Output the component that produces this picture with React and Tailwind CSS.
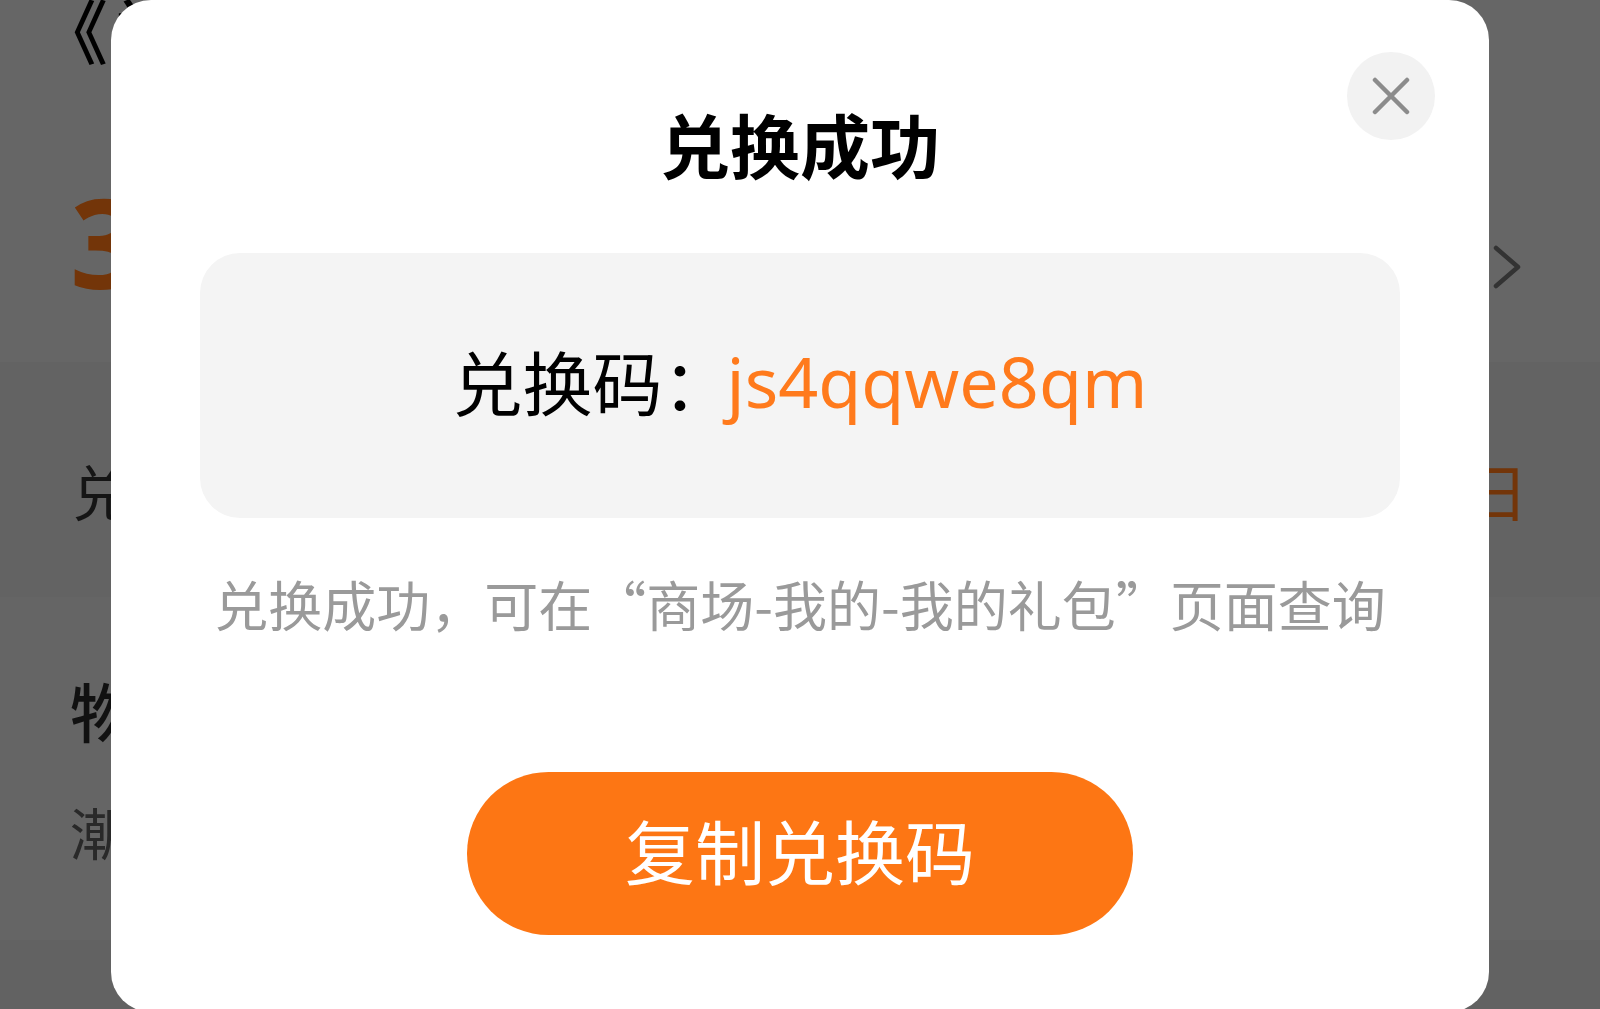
import React from "react";

const cjk = { fontFamily: '"Noto Sans CJK SC", "Noto Sans", sans-serif' };
const latin = { fontFamily: '"Noto Sans", "Noto Sans CJK SC", sans-serif' };

function CloseIcon() {
  return (
    <svg width="38" height="38" viewBox="0 0 38 38" fill="none">
      <path d="M3 3L35 35M35 3L3 35" stroke="#8c8c8c" strokeWidth="4.5" strokeLinecap="round" />
    </svg>
  );
}

function Chevron() {
  return (
    <svg width="30" height="44" viewBox="0 0 30 44" fill="none">
      <path d="M4 3L26 22L4 41" stroke="#333333" strokeWidth="4.5" strokeLinecap="round" strokeLinejoin="round" />
    </svg>
  );
}

// page behind the dialog, dimmed
function BackgroundPage() {
  return (
    <div className="flex flex-col w-full" style={cjk}>
      <div className="h-[362px] bg-[#666666] flex flex-col">
        <div className="pl-[38px] -mt-[6px] h-[70px] text-[70px] leading-[70px] font-medium text-black">《兑换礼包》</div>
        <div className="flex items-center justify-between pl-[70px] pr-[78px] mt-[115px]">
          <span className="text-[124px] leading-[124px] font-bold text-[#733509]" style={latin}>3</span>
          <div className="mt-[52px]">
            <Chevron />
          </div>
        </div>
      </div>
      <div className="h-[235px] bg-[#636363] flex items-center justify-between pl-[72px] pr-[72px] pt-[20px]">
        <span className="text-[60px] leading-[60px] text-[#151515]">兑换时间</span>
        <span className="text-[62px] leading-[62px] text-[#733509]">2024年5月1日</span>
      </div>
      <div className="h-[343px] bg-[#656565] flex flex-col pl-[70px] pt-[80px]">
        <span className="text-[64px] leading-[64px] font-medium text-[#111111]">物品信息</span>
        <span className="mt-[62px] text-[56px] leading-[56px] text-[#292929]">潮流礼包</span>
      </div>
      <div className="h-[69px] bg-[#626262]" />
    </div>
  );
}

export default function App() {
  return (
    <div className="relative w-[1600px] h-[1009px] overflow-hidden bg-[#666666]">
      <BackgroundPage />

      {/* dialog */}
      <div className="absolute left-[111px] top-0 w-[1378px] h-[1012px] bg-white rounded-[40px] flex flex-col items-center" style={cjk}>
        <button className="absolute right-[54px] top-[52px] w-[88px] h-[88px] rounded-full bg-[#f2f2f2] flex items-center justify-center">
          <CloseIcon />
        </button>

        <h1 className="mt-[109px] text-[70px] leading-[70px] font-bold text-black">兑换成功</h1>

        <div className="mt-[74px] w-[1200px] h-[265px] rounded-[40px] bg-[#f4f4f4] flex items-center justify-center pb-[10px]">
          <span className="text-[70px] leading-[70px] text-black">兑换码：</span>
          <span className="text-[70px] leading-[70px] text-[#ff7a1c] -ml-[6px]" style={latin}>js4qqwe8qm</span>
        </div>

        <p className="mt-[59px] text-[54px] leading-[54px] text-[#9a9a9a] whitespace-nowrap">
          兑换成功，可在“商场-我的-我的礼包”页面查询
        </p>

        <button className="mt-[141px] w-[666px] h-[163px] rounded-full bg-[#fd7614] text-white text-[70px] leading-[70px] flex items-center justify-center pb-[8px]">
          复制兑换码
        </button>
      </div>
    </div>
  );
}
